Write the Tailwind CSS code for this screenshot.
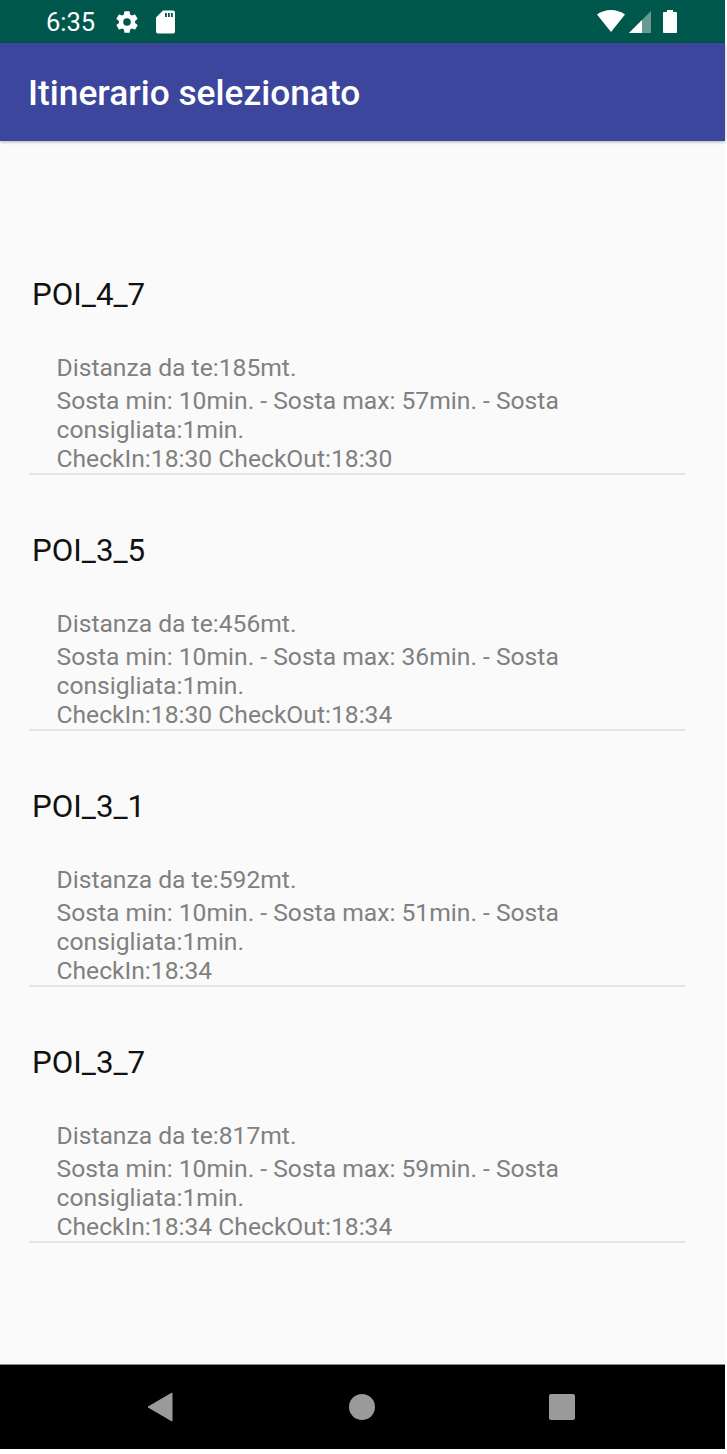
<!DOCTYPE html>
<html lang="en">
<head>
    <meta charset="UTF-8">
    <meta name="viewport" content="width=device-width, initial-scale=1.0">
    <title>Itinerario selezionato</title>
    <script src="https://cdn.jsdelivr.net/npm/@tailwindcss/browser@4"></script>
</head>
<body class="bg-white font-['Roboto',sans-serif]">
    <div class="w-[725px] h-[1449px] flex flex-col bg-[#fafafa]">
        <!-- status bar -->
        <div class="h-[43px] bg-[#00574b] flex items-center pl-[46px] pr-[47px] text-white">
            <span class="text-[25.5px] leading-none mt-[2px]">6:35</span>
            <svg class="ml-[19px] w-[26px] h-[26px]" viewBox="0 0 24 24" fill="#fff"><path d="M19.4 13c.04-.33.1-.66.1-1s-.06-.67-.1-1l2.100-1.650c.2-.15.25-.42.12-.64l-2-3.460c-.12-.22-.39-.3-.61-.22l-2.490 1c-.52-.4-1.080-.73-1.690-.98l-.38-2.650A.49.49 0 0 0 14 2h-4c-.25 0-.46.18-.49.42l-.38 2.650c-.61.25-1.170.59-1.690.98l-2.490-1c-.23-.09-.49 0-.61.22l-2 3.460c-.13.22-.07.49.12.64L4.600 11c-.04.33-.1.67-.1 1s.06.67.1 1l-2.100 1.650c-.2.15-.25.42-.12.64l2 3.460c.12.22.39.3.61.22l2.490-1c.52.4 1.080.73 1.690.98l.38 2.650c.03.24.24.42.49.42h4c.25 0 .46-.18.49-.42l.38-2.650c.61-.25 1.170-.59 1.690-.98l2.490 1c.23.09.49 0 .61-.22l2-3.460c.12-.22.07-.49-.12-.64L19.400 13zM12 15.500a3.500 3.500 0 1 1 0-7 3.500 3.500 0 0 1 0 7z"/></svg>
            <svg class="ml-[15px] w-[22px] h-[24px]" viewBox="0 0 22 24" fill="#fff"><path fill-rule="evenodd" d="M8 .5h10a2 2 0 0 1 2 2v19a2 2 0 0 1-2 2H3a2 2 0 0 1-2-2V7.500z M10 3v4h1.800V3z M13 3v4h1.800V3z M16 3v4h1.800V3z"/></svg>
            <div class="ml-auto flex items-center">
                <svg class="w-[28px] h-[24px]" viewBox="0 0 28 24" fill="#fff"><path d="M14 22 0 4.500C4 1.500 9 0 14 0s10 1.500 14 4.500z"/></svg>
                <svg class="ml-[4px] w-[22px] h-[24px]" viewBox="0 0 22 24"><path d="M0 23 22 1v22z" fill="#fff" fill-opacity=".4"/><path d="M0 23 13 10v13z" fill="#fff"/></svg>
                <svg class="ml-[11px] w-[16px] h-[24px]" viewBox="0 0 16 24" fill="#fff"><path d="M5 2V0h6v2h3a1 1 0 0 1 1 1v19a1 1 0 0 1-1 1H2a1 1 0 0 1-1-1V3a1 1 0 0 1 1-1z"/></svg>
            </div>
        </div>

        <!-- app bar -->
        <div class="h-[98px] bg-[#3c469c] flex items-center pl-[28px] pt-[3px] shadow-[0_1px_3px_rgba(0,0,0,0.3)]">
            <h1 class="text-[35.3px] leading-none font-medium text-white">Itinerario selezionato</h1>
        </div>

        <!-- list -->
        <div class="flex-1 pt-[128px] pl-[29px] pr-[40px] flex flex-col gap-[50px]">
            <div class="h-[206px] flex flex-col border-b-2 border-[#e4e4e4]">
                <div class="pl-[3px] text-[31.3px] leading-[50px] mt-[1px] text-[#111]">POI_4_7</div>
                <div class="pl-[27.5px] pt-[33px] text-[24.65px] leading-[29px] text-[#808080]">
                    <p class="mb-[4px]">Distanza da te:185mt.</p>
                    <p>Sosta min: 10min. - Sosta max: 57min. - Sosta consigliata:1min.<br>CheckIn:18:30 CheckOut:18:30</p>
                </div>
            </div>
            <div class="h-[206px] flex flex-col border-b-2 border-[#e4e4e4]">
                <div class="pl-[3px] text-[31.3px] leading-[50px] mt-[1px] text-[#111]">POI_3_5</div>
                <div class="pl-[27.5px] pt-[33px] text-[24.65px] leading-[29px] text-[#808080]">
                    <p class="mb-[4px]">Distanza da te:456mt.</p>
                    <p>Sosta min: 10min. - Sosta max: 36min. - Sosta consigliata:1min.<br>CheckIn:18:30 CheckOut:18:34</p>
                </div>
            </div>
            <div class="h-[206px] flex flex-col border-b-2 border-[#e4e4e4]">
                <div class="pl-[3px] text-[31.3px] leading-[50px] mt-[1px] text-[#111]">POI_3_1</div>
                <div class="pl-[27.5px] pt-[33px] text-[24.65px] leading-[29px] text-[#808080]">
                    <p class="mb-[4px]">Distanza da te:592mt.</p>
                    <p>Sosta min: 10min. - Sosta max: 51min. - Sosta consigliata:1min.<br>CheckIn:18:34</p>
                </div>
            </div>
            <div class="h-[206px] flex flex-col border-b-2 border-[#e4e4e4]">
                <div class="pl-[3px] text-[31.3px] leading-[50px] mt-[1px] text-[#111]">POI_3_7</div>
                <div class="pl-[27.5px] pt-[33px] text-[24.65px] leading-[29px] text-[#808080]">
                    <p class="mb-[4px]">Distanza da te:817mt.</p>
                    <p>Sosta min: 10min. - Sosta max: 59min. - Sosta consigliata:1min.<br>CheckIn:18:34 CheckOut:18:34</p>
                </div>
            </div>
        </div>

        <!-- nav bar -->
        <div class="h-[85px] bg-black border-t border-[#8a8a8a] flex items-center">
            <svg class="ml-[147px] w-[26px] h-[30px] -mt-[1px]" viewBox="0 0 26 30" fill="#9a9a9a"><path d="M25 1v28L1 15z" stroke="#9a9a9a" stroke-linejoin="round"/></svg>
            <div class="ml-[176px] w-[26px] h-[26px] -mt-[1px] rounded-full bg-[#9a9a9a]"></div>
            <div class="ml-[174px] w-[26px] h-[26px] -mt-[1px] rounded-[2px] bg-[#9a9a9a]"></div>
        </div>
    </div>
</body>
</html>
